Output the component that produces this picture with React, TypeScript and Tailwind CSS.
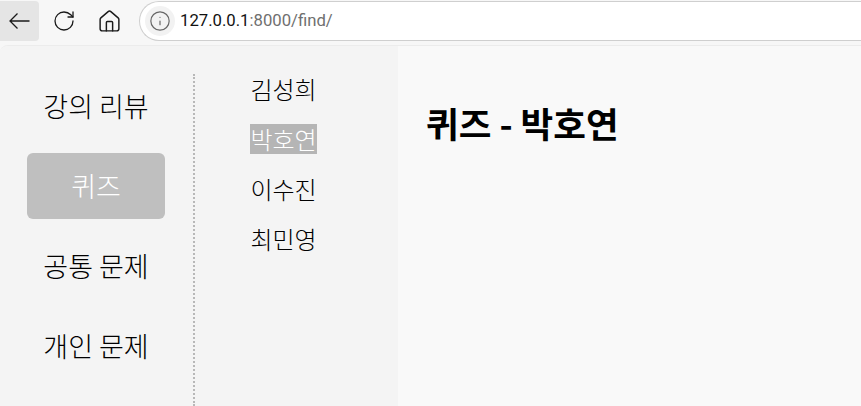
import { Home, Info, RotateCw } from 'lucide-react';

const FONT = "font-['Noto_Sans_CJK_KR','Noto_Sans',sans-serif]";

const navItems = ['강의 리뷰', '퀴즈', '공통 문제', '개인 문제'];
const names = ['김성희', '박호연', '이수진', '최민영'];

function Toolbar() {
  return (
    <div className="flex h-[45px] items-center bg-[#f7f7f7] pb-[3px]">
      <div className="flex h-10 w-[39px] items-center justify-center rounded-r bg-[#e5e5e5]">
        <svg width="21" height="20" viewBox="0 0 21 20" fill="none" stroke="#1a1a1a" strokeWidth="1.3">
          <path d="M20.5 10H1M8.5 2.5L1 10l7.5 7.5" />
        </svg>
      </div>
      <div className="flex w-[50px] justify-center">
        <RotateCw size={24} strokeWidth={1.3} className="text-[#1a1a1a]" />
      </div>
      <div className="flex w-[40px] justify-center">
        <Home size={25} strokeWidth={1.4} className="text-[#1a1a1a]" />
      </div>
      <div className="ml-[10px] flex h-[40px] flex-1 items-center rounded-l-[20px] border border-r-0 border-[#cfcfcf] bg-white pl-[5px]">
        <div className="flex h-[30px] w-[30px] items-center justify-center rounded-full bg-[#f2f2f2]">
          <Info size={22} strokeWidth={1.3} className="text-[#666]" />
        </div>
        <span className="ml-[5px] font-['Roboto',sans-serif] text-[16.7px] text-[#111]">
          127.0.0.1<span className="text-[#6f6f6f]">:8000/find/</span>
        </span>
      </div>
    </div>
  );
}

export default function App() {
  return (
    <div className={`flex h-[406px] w-[861px] flex-col overflow-hidden bg-[#f7f7f7] ${FONT}`}>
      <Toolbar />
      <div className="flex flex-1 overflow-hidden rounded-tl-lg border-t border-[#ececec] bg-[#f9f9f9]">
        <div className="w-[398px] shrink-0 bg-[#f4f4f4] pt-[28px]">
          <div className="flex h-full">
            <nav className="w-[195px] shrink-0 border-r-2 border-dotted border-[#b8b8b8] pl-[27px] pr-[28px]">
              <div className="-mt-px flex flex-col gap-[14px]">
                {navItems.map((item) => (
                  <div
                    key={item}
                    className={`flex h-[66px] items-center justify-center rounded-md pt-px text-[27px] font-light ${
                      item === '퀴즈' ? 'bg-[#bfbfbf] text-white' : 'text-black'
                    }`}
                  >
                    {item}
                  </div>
                ))}
              </div>
            </nav>
            <ul className="flex flex-1 flex-col items-center gap-[20px] pr-[26px] text-[24px] font-light leading-[30px]">
              {names.map((name) => (
                <li key={name} className={name === '박호연' ? 'bg-[#b5b5b5] text-white' : 'text-black'}>
                  {name}
                </li>
              ))}
            </ul>
          </div>
        </div>
        <main className="pl-[28px] pt-[52px]">
          <h1 className="text-[35.5px] font-bold leading-[50px] text-black">퀴즈 - 박호연</h1>
        </main>
      </div>
    </div>
  );
}
